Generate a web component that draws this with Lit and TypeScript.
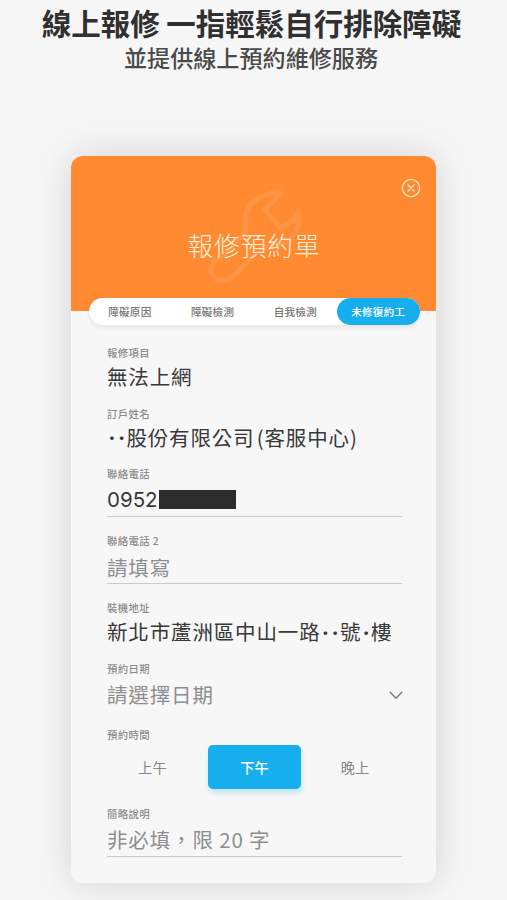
import { LitElement, html, css, svg } from "lit";
import { customElement, property } from "lit/decorators.js";
import { classMap } from "lit/directives/class-map.js";

const wrench = svg`<path d="M91 13 C76 11 59 21 56 34 C54 41 59 46 54 53 C48 63 33 74 23 83 C18 91 23 101 33 101 C42 99 52 88 62 77 C72 65 79 67 89 65 C104 61 111 46 108 31 L104 40 L90 48 L75 29 Z"/>`;

@customElement("form-field")
class FormField extends LitElement {
  @property() label = "";
  @property() value = "";
  @property({ type: Boolean }) placeholder = false;
  @property({ type: Boolean }) underline = false;

  static styles = css`
    :host { display: block; }
    .label {
      font-size: 10.4px; letter-spacing: .35px; line-height: 14px; height: 14px;
      font-weight: 500; color: #8c8c8c; white-space: pre;
    }
    .body { display: flex; align-items: center; height: 32px; }
    .body.input { height: 35px; padding-top: 1px; box-sizing: border-box; }
    .value {
      flex: 1; display: flex; font-size: 20.5px; letter-spacing: .85px; line-height: 32px;
      color: #383838; white-space: pre;
    }
    .value.hint { color: #8e8e8e; }
    .input .value { padding-top: 1.5px; }
    .body:not(.input) .run { word-spacing: -3.2px; }
    .dot { width: 9.7px; padding-top: 1.5px; height: 30px; text-align: center; font-family: "Noto Sans", sans-serif; font-weight: 700; letter-spacing: 0; }
    .line { height: 1px; background: #cbcbcb; }
  `;

  render() {
    const input = this.placeholder || this.underline;
    return html`
      <div class="label">${this.label}</div>
      <div class=${classMap({ body: true, input })}>
        <div class=${classMap({ value: true, hint: this.placeholder })}>${this.value
          .split(/(·)/)
          .filter((s) => s)
          .map((s) => html`<span class=${s === "·" ? "dot" : "run"}>${s}</span>`)}<slot></slot></div>
        <slot name="end"></slot>
      </div>
      ${this.underline ? html`<div class="line"></div>` : null}
    `;
  }
}

@customElement("app-root")
class AppRoot extends LitElement {
  static styles = css`
    :host {
      display: block; width: 507px; height: 900px; overflow: hidden;
      background: #f6f6f6;
      font-family: "Noto Sans CJK TC", "Noto Sans", sans-serif;
    }
    .page { display: flex; flex-direction: column; align-items: center; height: 900px; }
    .title { margin: 4px 0 0; font-size: 29.5px; line-height: 37px; font-weight: 700; color: #303030; white-space: nowrap; text-align: center; width: 100%; text-indent: -4px; }
    .subtitle { margin: 1px 0 0; font-size: 23.1px; line-height: 30px; font-weight: 500; color: #4a4a4a; white-space: nowrap; width: 100%; text-align: center; text-indent: -5px; }
    .card {
      width: 365px; height: 727px; margin: 84px 0 0 0; border-radius: 12px;
      background: #f7f7f7; box-shadow: 0 0 36px rgba(0,0,0,.14);
    }
    .head {
      height: 155px; box-sizing: border-box; border-radius: 12px 12px 0 0; background: #ff8a32;
      position: relative; display: flex; align-items: center; justify-content: center; padding: 23px 0 0 1px;
    }
    .wrench { position: absolute; left: 119px; top: 24px; fill: none; stroke: #fff; stroke-opacity: .09; stroke-width: 5; stroke-linejoin: round; }
    .close { position: absolute; right: 15.5px; top: 22px; fill: none; stroke: #ffe5c8; stroke-width: 1.3; stroke-linecap: round; }
    .name { position: relative; font-size: 25.7px; letter-spacing: .9px; line-height: 38px; font-weight: 300; color: #fff0d8; }
    .tabs {
      position: relative; display: grid; grid-template-columns: repeat(4, 1fr); width: 331px; height: 27px;
      margin: -13px 0 0 17.5px; border-radius: 14px; background: #fff; box-shadow: 0 2px 5px rgba(0,0,0,.09);
    }
    .tab { display: flex; align-items: center; justify-content: center; font-size: 10.6px; letter-spacing: .2px; font-weight: 500; color: #777; border-radius: 14px; }
    .tab.on { background: #17aeee; color: #fff; }
    .form { padding: 21px 34px 0 36px; }
    .f1, .f2 { height: 60.5px; }
    .f3 { height: 67px; }
    .f4 { height: 67px; }
    .f5 { height: 60.5px; }
    .f6 { height: 66px; }
    .phone { display: flex; align-items: center; height: 32px; font-family: Inter, sans-serif; font-size: 20.5px; letter-spacing: 0; }
    .mask { width: 77px; height: 19px; background: #2d2d2d; margin-left: 1px; }
    .chev { display: block; margin: 3px -1px 0 0; fill: none; stroke: #777; stroke-width: 1.3; stroke-linecap: round; stroke-linejoin: round; }
    .label { font-size: 10.4px; letter-spacing: .35px; line-height: 14px; height: 14px; font-weight: 500; color: #8c8c8c; }
    .times { display: grid; grid-template-columns: 91px 93px 1fr; column-gap: 10px; height: 44px; margin: 3px 0 18px; }
    .time { display: flex; align-items: center; justify-content: center; font-size: 14.2px; color: #858585; border-radius: 5px; }
    .time:last-child { padding-right: 3px; }
    .time.on { background: #17aeee; color: #fff; font-weight: 500; box-shadow: 1px 4px 5px rgba(23,174,238,.25); }
  `;

  tabs = ["障礙原因", "障礙檢測", "自我檢測", "未修復約工"];
  times = ["上午", "下午", "晚上"];

  render() {
    return html`
      <div class="page">
        <h1 class="title">線上報修 一指輕鬆自行排除障礙</h1>
        <p class="subtitle">並提供線上預約維修服務</p>
        <div class="card">
          <div class="head">
            <svg class="wrench" width="130" height="120" viewBox="0 0 130 120">${wrench}</svg>
            <svg class="close" width="20" height="20" viewBox="0 0 20 20"><circle cx="10" cy="10" r="8.6"/><path d="M7 7l6 6M13 7l-6 6"/></svg>
            <div class="name">報修預約單</div>
          </div>
          <div class="tabs">
            ${this.tabs.map((t, i) => html`<div class=${classMap({ tab: true, on: i === 3 })}>${t}</div>`)}
          </div>
          <div class="form">
            <form-field class="f1" label="報修項目" value="無法上網"></form-field>
            <form-field class="f2" label="訂戶姓名" value="··股份有限公司 (客服中心)"></form-field>
            <form-field class="f3" label="聯絡電話" underline><span class="phone">0952<span class="mask"></span></span></form-field>
            <form-field class="f4" label="聯絡電話 2" value="請填寫" placeholder underline></form-field>
            <form-field class="f5" label="裝機地址" value="新北市蘆洲區中山一路··號·樓"></form-field>
            <form-field class="f6" label="預約日期" value="請選擇日期" placeholder>
              <svg slot="end" class="chev" width="14" height="9" viewBox="0 0 14 9"><path d="M1.2 1.2L7 7.2L12.8 1.2"/></svg>
            </form-field>
            <div class="label">預約時間</div>
            <div class="times">
              ${this.times.map((t, i) => html`<div class=${classMap({ time: true, on: i === 1 })}>${t}</div>`)}
            </div>
            <form-field label="簡略說明" value="非必填，限 20 字" placeholder underline></form-field>
          </div>
        </div>
      </div>
    `;
  }
}
